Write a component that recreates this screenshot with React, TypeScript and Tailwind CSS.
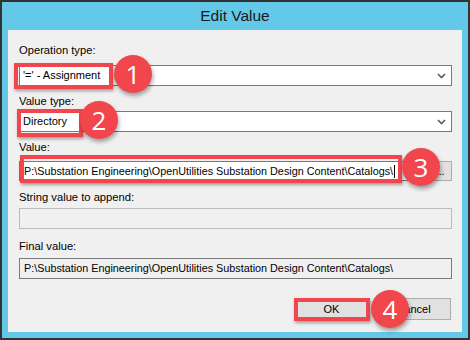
import React from "react";

const font = { fontFamily: '"Liberation Sans", Arial, sans-serif' };

function Chevron() {
  return (
    <svg width="9" height="6" viewBox="0 0 9 6" className="shrink-0">
      <path d="M1 1 L4.5 4.5 L8 1" fill="none" stroke="#5a5a5a" strokeWidth="1.6" />
    </svg>
  );
}

function Combo({ text }: { text: string }) {
  return (
    <div className="h-[21px] bg-white border border-[#7a7a7a] flex items-center pl-[3px] pr-[5px]">
      <span className="flex-1 text-[11px] text-black leading-none">{text}</span>
      <Chevron />
    </div>
  );
}

function Label({ text, className = "" }: { text: string; className?: string }) {
  return <div className={"h-[15px] leading-[15px] text-[11.2px] text-black " + className}>{text}</div>;
}

function Badge({ n, x, y }: { n: string; x: number; y: number }) {
  return (
    <div
      className="absolute w-[38px] h-[38px] rounded-full bg-[#f0464c] flex items-center justify-center text-white text-[26px] shadow-[1px_3px_4px_rgba(0,0,0,0.35)]"
      style={{ left: x - 19, top: y - 19, fontFamily: '"Open Sans", "Liberation Sans", sans-serif' }}
    >
      {n}
    </div>
  );
}

function Hl({ x, y, w, h }: { x: number; y: number; w: number; h: number }) {
  return (
    <div
      className="absolute border-[4px] border-[#f0464c] shadow-[1px_2px_3px_rgba(0,0,0,0.35)]"
      style={{ left: x, top: y, width: w, height: h }}
    />
  );
}

export default function App() {
  const path = "P:\\Substation Engineering\\OpenUtilities Substation Design Content\\Catalogs\\";
  return (
    <div className="relative w-[470px] h-[340px] bg-[#64c8e8] border-2 border-[#333333] flex flex-col" style={font}>
      <div className="h-[28px] flex items-center justify-center text-[15.5px] text-[#1a1a1a]">Edit Value</div>
      <div className="mx-[6px] h-[302px] bg-[#f0f0f0] pl-[11px] pr-[10px] pt-[13px] flex flex-col">
        <Label text="Operation type:" />
        <div className="mt-[7px]">
          <Combo text="'=' - Assignment" />
        </div>
        <Label text="Value type:" className="mt-[8px]" />
        <div className="mt-[2px]">
          <Combo text="Directory" />
        </div>
        <Label text="Value:" className="mt-[8px]" />
        <div className="mt-[6px] flex gap-[4px] h-[20px]">
          <div className="flex-1 bg-white border border-[#7a7a7a] flex items-center pl-[4px] text-[10.8px] text-black whitespace-nowrap overflow-hidden">
            {path}
            <span className="w-px h-[13px] bg-black ml-px" />
          </div>
          <div className="w-[24px] bg-[#e1e1e1] border border-[#adadad] flex items-center justify-center text-[11px] text-black">
            ...
          </div>
        </div>
        <Label text="String value to append:" className="mt-[9px]" />
        <div className="mt-[3px] h-[21px] border border-[#bcbcbc] bg-[#f0f0f0]" />
        <Label text="Final value:" className="mt-[10px]" />
        <div className="mt-[4px] h-[21px] border border-[#7a7a7a] bg-[#f0f0f0] flex items-center pl-[4px] text-[10.8px] text-black whitespace-nowrap overflow-hidden">
          {path}
        </div>
        <div className="mt-[19px] flex justify-end gap-[7px] pr-[1px]">
          <div className="w-[75px] h-[22px] bg-[#e1e1e1] border border-[#adadad] flex items-center justify-center text-[11px] text-black">
            OK
          </div>
          <div className="w-[75px] h-[22px] bg-[#e1e1e1] border border-[#adadad] flex items-center justify-center text-[11px] text-black">
            Cancel
          </div>
        </div>
      </div>

      <Hl x={12} y={61} w={99} h={26} />
      <Hl x={15} y={107} w={66} h={28} />
      <Hl x={18} y={153} w={382} h={28} />
      <Hl x={292} y={296} w={76} h={23} />

      <Badge n="1" x={131} y={72} />
      <Badge n="2" x={97} y={118} />
      <Badge n="3" x={419} y={165} />
      <Badge n="4" x={388} y={307} />
    </div>
  );
}
